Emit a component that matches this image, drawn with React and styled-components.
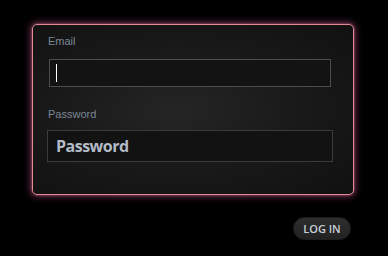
import styled, { createGlobalStyle } from "styled-components";

const GlobalStyle = createGlobalStyle`
  html, body {
    margin: 0;
    padding: 0;
    background: #000;
  }
`;

const LoginPage = () => {
  return (
    <Page>
      <GlobalStyle />
      <Panel>
        <Label>Email</Label>
        <Field $inset={1} $top={11} $height={28}>
          <Caret />
        </Field>
        <Label $top={21}>Password</Label>
        <Field as="input" $inset={-1} $top={9} $height={32} placeholder="Password" />
      </Panel>
      <Actions>
        <LoginButton>LOG IN</LoginButton>
      </Actions>
    </Page>
  );
};

const Page = styled.div`
  width: 388px;
  height: 256px;
  box-sizing: border-box;
  padding: 24px 0 0 32px;
`;

const Panel = styled.div`
  width: 322px;
  height: 171px;
  box-sizing: border-box;
  padding: 10px 21px 0 15px;
  border: 1px solid #e3899a;
  border-radius: 5px;
  background: radial-gradient(ellipse at 45% 50%, #252525 0%, #181818 55%, #111 100%);
  box-shadow: 0 0 7px 1px rgba(214, 92, 150, 0.6), 0 0 2px rgba(255, 150, 160, 0.6);
`;

const Label = styled.div`
  margin-top: ${(p) => p.$top || 0}px;
  font-family: "Liberation Sans", Arial, sans-serif;
  font-size: 11px;
  line-height: 13px;
  color: #7b8896;
`;

const Field = styled.div`
  display: flex;
  align-items: center;
  width: calc(100% - ${(p) => p.$inset * 2}px);
  height: ${(p) => p.$height}px;
  margin: ${(p) => p.$top}px 0 0 ${(p) => p.$inset}px;
  box-sizing: border-box;
  padding: 0 0 0 6px;
  border: 1px solid #4d4d4d;
  background: #131313;
  outline: none;
  font-family: "Open Sans", sans-serif;
  font-weight: 700;
  font-size: 16px;
  letter-spacing: -0.5px;
  color: #b9c2cb;
  &::placeholder {
    color: #b3bcc6;
    opacity: 1;
  }
  &:is(input) {
    border-color: #3b3b3b;
    padding-left: 8px;
    background: #121212;
  }
`;

const Caret = styled.span`
  width: 1px;
  height: 18px;
  background: #fff;
`;

const Actions = styled.div`
  display: flex;
  justify-content: flex-end;
  width: 319px;
  margin-top: 22px;
`;

const LoginButton = styled.button`
  width: 58px;
  height: 23px;
  padding: 0;
  border: 1px solid #1e1e1e;
  border-radius: 12px;
  background: linear-gradient(#2d2d2d, #222);
  font-family: "Open Sans", sans-serif;
  font-weight: 600;
  font-size: 11px;
  color: #c7d0d8;
  cursor: pointer;
`;

export default LoginPage;
